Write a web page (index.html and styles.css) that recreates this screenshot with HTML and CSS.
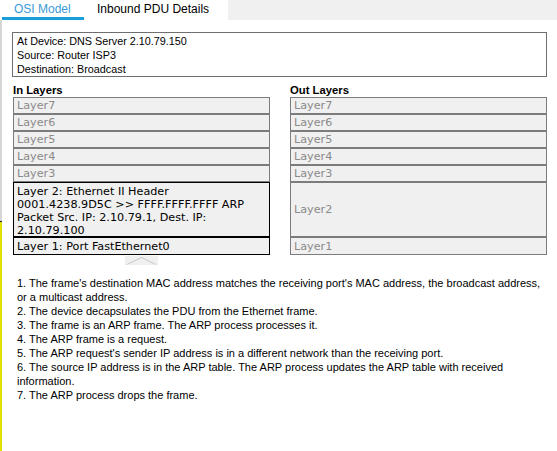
FILE: index.html
```html
<!DOCTYPE html>
<html>
<head>
<meta charset="utf-8">
<link rel="stylesheet" href="styles.css">
</head>
<body>
<div class="page">
  <div class="edge">
    <div class="edge-top"></div>
    <div class="edge-gray"></div>
    <div class="edge-yellow"></div>
  </div>
  <div class="main">
    <div class="tabs">
      <div class="tab tab-active">OSI Model</div>
      <div class="tab tab-second">Inbound PDU Details</div>
      <div class="tab-fill"></div>
    </div>
    <div class="content">
      <div class="info">
        <div>At Device: DNS Server 2.10.79.150</div>
        <div>Source: Router ISP3</div>
        <div>Destination: Broadcast</div>
      </div>
      <div class="layers">
        <div class="col">
          <div class="col-title">In Layers</div>
          <div class="layer">Layer7</div>
          <div class="layer">Layer6</div>
          <div class="layer">Layer5</div>
          <div class="layer">Layer4</div>
          <div class="layer">Layer3</div>
          <div class="layer layer2 on">Layer 2: Ethernet II Header<br>0001.4238.9D5C &gt;&gt; FFFF.FFFF.FFFF ARP<br>Packet Src. IP: 2.10.79.1, Dest. IP:<br>2.10.79.100</div>
          <div class="layer layer1 on">Layer 1: Port FastEthernet0</div>
          <div class="arrow">
            <svg width="33" height="9" viewBox="0 0 33 9"><rect width="33" height="9" fill="#f0f0f0"/><polyline points="2,8.5 16.5,1.5 31,8.5" fill="none" stroke="#c8c8c8" stroke-width="1"/></svg>
          </div>
        </div>
        <div class="col">
          <div class="col-title">Out Layers</div>
          <div class="layer">Layer7</div>
          <div class="layer">Layer6</div>
          <div class="layer">Layer5</div>
          <div class="layer">Layer4</div>
          <div class="layer">Layer3</div>
          <div class="layer layer2 centered">Layer2</div>
          <div class="layer layer1">Layer1</div>
        </div>
      </div>
      <div class="steps">
        <div>1. The frame's destination MAC address matches the receiving port's MAC address, the broadcast address, or a multicast address.</div>
        <div>2. The device decapsulates the PDU from the Ethernet frame.</div>
        <div>3. The frame is an ARP frame. The ARP process processes it.</div>
        <div>4. The ARP frame is a request.</div>
        <div>5. The ARP request's sender IP address is in a different network than the receiving port.</div>
        <div>6. The source IP address is in the ARP table. The ARP process updates the ARP table with received information.</div>
        <div>7. The ARP process drops the frame.</div>
      </div>
    </div>
  </div>
</div>
</body>
</html>
```

FILE: styles.css
```css
html, body {
  margin: 0;
  padding: 0;
  background: #ffffff;
}
.page {
  display: flex;
  width: 557px;
  height: 451px;
  overflow: hidden;
  font-family: "Liberation Sans", Arial, sans-serif;
  color: #000;
}
.edge {
  width: 2px;
  display: flex;
  flex-direction: column;
  flex: none;
}
.edge-top {
  height: 20px;
  background: #ffffff;
}
.edge-gray {
  height: 201px;
  background: #d6d6d6;
}
.edge-yellow {
  flex: 1;
  background: #e2e200;
  border-top: 1px solid #202020;
}
.main {
  width: 555px;
  flex: none;
}
.tabs {
  display: flex;
  height: 20px;
}
.tab {
  box-sizing: border-box;
  height: 20px;
  font-size: 12px;
  line-height: 16px;
  padding-top: 1px;
  background: #ffffff;
}
.tab-active {
  width: 82px;
  padding-left: 12px;
  color: #3a9ad6;
  border-bottom: 3px solid #1a9ed9;
}
.tab-second {
  width: 144px;
  padding-left: 13px;
}
.tab-fill {
  flex: 1;
  background: #f0f0f0;
}
.content {
  padding: 12px 0 0 10px;
}
.info {
  width: 535px;
  box-sizing: border-box;
  border: 1px solid #6f6f6f;
  padding: 1px 4px 0;
  font-size: 10.8px;
  line-height: 14px;
}
.layers {
  display: grid;
  grid-template-columns: 257px 257px;
  column-gap: 20px;
  margin: 6px 0 0 1px;
}
.col {
  display: flex;
  flex-direction: column;
}
.col-title {
  font-weight: bold;
  font-size: 11.3px;
  line-height: 14px;
}
.layer {
  box-sizing: border-box;
  height: 17px;
  border: 1px solid #7c7c7c;
  background: #f0f0f0;
  padding: 0 3px;
  font-family: "DejaVu Sans", Verdana, sans-serif;
  font-size: 11.2px;
  line-height: 16px;
  color: #8a8a8a;
}
.layer2 {
  height: 55px;
  padding-top: 2px;
  line-height: 13px;
}
.layer1 {
  height: 18px;
  line-height: 17px;
}
.on {
  border-color: #000000;
  color: #000000;
}
.centered {
  display: flex;
  align-items: center;
  padding-top: 0;
}
.arrow {
  display: flex;
  justify-content: center;
  margin-top: 1px;
  height: 9px;
}
.arrow svg {
  display: block;
}
.steps {
  width: 528px;
  margin: 11px 0 0 5px;
  font-size: 11px;
  line-height: 14px;
}
```
